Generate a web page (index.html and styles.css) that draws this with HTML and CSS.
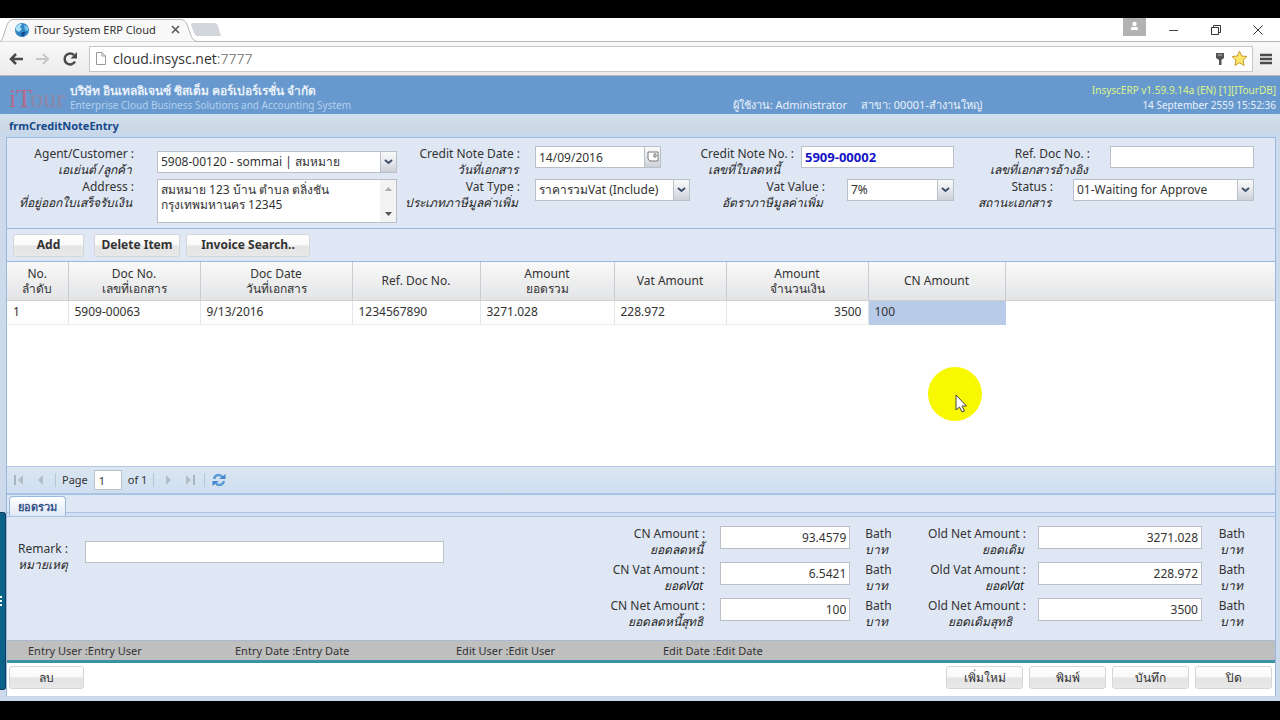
FILE: index.html
```html
<!DOCTYPE html>
<html lang="th">
<head>
<meta charset="UTF-8" />
<meta name="viewport" content="width=device-width, initial-scale=1.0"/>
<title>iTour System ERP Cloud</title>
<link rel="stylesheet" href="styles.css">
</head>
<body>

<div class="window">

  <!-- browser tabs -->
  <div class="tabs">
    <svg class="tab-shape" width="230" height="24" viewBox="0 0 230 24">
      <path d="M0 23.500C2 23 3 19 5 13S8 2 13 1.500H181C186 2 187 6 189 12S192 22 197 23.500H230" fill="#f8f8f8" stroke="#b4b4b4"/>
      <path d="M193 5H214Q217 5 218 8L221 18H197Q195 18 194 15L191 7Q191 5 193 5Z" fill="#d3d6da"/>
    </svg>
    <div class="tab">
      <svg width="16" height="16" viewBox="0 0 16 16">
        <circle cx="8" cy="8" r="7" fill="#2f86c5"/>
        <path d="M2 5Q5 1 8 2L6 5L8 7L5 10L2 8Z" fill="#a9e0f5"/>
        <path d="M10 3L14 5L14 9L11 8Z" fill="#7cc4ec"/>
        <path d="M8 10L12 10L9 15L7 13Z" fill="#164f8b"/>
      </svg>
      <span class="tab-title">iTour System ERP Cloud</span>
      <button class="tab-close" aria-label="Close tab"><svg width="9" height="9" viewBox="0 0 9 9"><path d="M1 1L8 8M8 1L1 8" stroke="#555" stroke-width="1.500"/></svg></button>
    </div>
    <div class="window-buttons">
      <span class="person"><svg width="23" height="18" viewBox="0 0 23 18"><rect width="23" height="18" fill="#b2b2b2"/><circle cx="11.500" cy="6" r="2.200" fill="#fff"/><path d="M8 12V10Q8 9 10 9H13Q15 9 15 10V12Z" fill="#fff"/></svg></span>
      <button aria-label="Minimize"><svg width="12" height="12" viewBox="0 0 12 12"><path d="M1 6.500H10" stroke="#444"/></svg></button>
      <button aria-label="Restore"><svg width="12" height="12" viewBox="0 0 12 12"><path d="M1.500 3.500H8.500V10.500H1.500ZM3.500 3V1.500H10.500V8.500H9" fill="none" stroke="#333"/></svg></button>
      <button aria-label="Close"><svg width="12" height="12" viewBox="0 0 12 12"><path d="M1.500 1.500L10.500 10.500M10.500 1.500L1.500 10.500" stroke="#333"/></svg></button>
    </div>
  </div>

  <!-- address bar -->
  <div class="toolbar">
    <button aria-label="Back"><svg width="16" height="14" viewBox="0 0 16 14"><path d="M15 7H3M8 2L3 7L8 12" fill="none" stroke="#4a4a4a" stroke-width="2.500"/></svg></button>
    <button aria-label="Forward"><svg width="16" height="14" viewBox="0 0 16 14"><path d="M1 7H13M8 2L13 7L8 12" fill="none" stroke="#c6c6c6" stroke-width="2"/></svg></button>
    <button aria-label="Reload"><svg width="16" height="16" viewBox="0 0 16 16"><path d="M13 10.500A5.500 5.500 0 1 1 12 4" fill="none" stroke="#4a4a4a" stroke-width="2.500"/><path d="M15 1V7.500H8.500Z" fill="#4a4a4a"/></svg></button>
    <div class="address">
      <svg width="12" height="15" viewBox="0 0 12 15"><path d="M1.500 1.500H7L10.500 5V13.500H1.500ZM7 1.500V5H10.500" fill="#fff" stroke="#999"/></svg>
      <span class="url">cloud.insysc.net<span class="port">:7777</span></span>
      <svg width="10" height="14" viewBox="0 0 10 14"><path d="M1 1H9V6L6.500 8V13H4V8L1 6Z" fill="#555"/><path d="M3 3H7" stroke="#bbb"/></svg>
      <svg width="17" height="17" viewBox="0 0 17 17"><path d="M8.500 1.200L10.700 6L15.900 6.500L12 10.200L13.100 15.500L8.500 12.800L3.900 15.500L5 10.200L1.100 6.500L6.300 6Z" fill="#fde668" stroke="#c79a38"/></svg>
    </div>
    <button aria-label="Menu"><svg width="12" height="12" viewBox="0 0 12 12"><path d="M0 2H12M0 6H12M0 10H12" stroke="#4a4a4a" stroke-width="2.500"/></svg></button>
  </div>

  <!-- application header -->
  <header class="app-header">
    <div class="logo"><span>iT</span>our</div>
    <div class="company">
      <strong>บริษัท อินเทลลิเจนซ์ ซิสเต็ม คอร์เปอร์เรชั่น จำกัด</strong>
      <small>Enterprise Cloud Business Solutions and Accounting System</small>
    </div>
    <div class="login">
      <span>ผู้ใช้งาน: Administrator</span>
      <span>สาขา: 00001-สำงานใหญ่</span>
    </div>
    <div class="version">
      <span class="build">InsyscERP v1.59.9.14a (EN) [1][ITourDB]</span>
      <span>14 September 2559 15:52:36</span>
    </div>
  </header>

  <h1 class="form-title">frmCreditNoteEntry</h1>

  <main class="panel">
    <form class="entry-form">
      <div class="group">
        <div class="field middle">
          <label for="agent">Agent/Customer :<i>เอเย่นต์ /ลูกค้า</i></label>
          <span class="combo">
            <select id="agent"><option>5908-00120 - sommai | สมหมาย</option></select>
            <span class="trigger"><svg width="9" height="6" viewBox="0 0 9 6"><path d="M1 1L4.500 4L8 1" fill="none" stroke="#3d5068" stroke-width="2"/></svg></span>
          </span>
        </div>
        <div class="field">
          <label for="address">Address :<i>ที่อยู่ออกใบเสร็จรับเงิน</i></label>
          <span class="memo">
            <textarea id="address">สมหมาย 123 บ้าน ตำบล ตลิ่งชัน
กรุงเทพมหานคร 12345</textarea>
            <span class="memo-scroll">
              <svg width="7" height="4" viewBox="0 0 7 4"><path d="M0 4L3.500 0L7 4Z" fill="#aaa"/></svg>
              <svg width="7" height="4" viewBox="0 0 7 4"><path d="M0 0L3.500 4L7 0Z" fill="#555"/></svg>
            </span>
          </span>
        </div>
      </div>

      <div class="group group-vat">
        <div class="field">
          <label for="date">Credit Note Date :<i>วันที่เอกสาร</i></label>
          <span class="combo date">
            <input type="text" id="date" value="14/09/2016">
            <span class="trigger"><svg width="12" height="12" viewBox="0 0 12 12"><path d="M1 1H11V10H3L1 8Z" fill="#fff" stroke="#777"/><path d="M7 3H9V6H7Z" fill="none" stroke="#777"/></svg></span>
          </span>
        </div>
        <div class="field">
          <label for="vatType">Vat Type :<i>ประเภทภาษีมูลค่าเพิ่ม</i></label>
          <span class="combo">
            <select id="vatType"><option>ราคารวมVat (Include)</option></select>
            <span class="trigger"><svg width="9" height="6" viewBox="0 0 9 6"><path d="M1 1L4.500 4L8 1" fill="none" stroke="#3d5068" stroke-width="2"/></svg></span>
          </span>
        </div>
      </div>

      <div class="group group-no">
        <div class="field">
          <label for="noteNo">Credit Note No. :<i class="inset">เลขที่ใบลดหนี้</i></label>
          <input type="text" id="noteNo" class="note-no" value="5909-00002">
        </div>
        <div class="field wide-gap">
          <label for="vatValue">Vat Value :<i>อัตราภาษีมูลค่าเพิ่ม</i></label>
          <span class="combo vat-value">
            <select id="vatValue"><option>7%</option></select>
            <span class="trigger"><svg width="9" height="6" viewBox="0 0 9 6"><path d="M1 1L4.500 4L8 1" fill="none" stroke="#3d5068" stroke-width="2"/></svg></span>
          </span>
        </div>
      </div>

      <div class="group group-ref">
        <div class="field">
          <label for="refNo">Ref. Doc No. :<i>เลขที่เอกสารอ้างอิง</i></label>
          <input type="text" id="refNo" class="ref-no">
        </div>
        <div class="field">
          <label for="status">Status :<i>สถานะเอกสาร</i></label>
          <span class="combo status">
            <select id="status"><option>01-Waiting for Approve</option></select>
            <span class="trigger"><svg width="9" height="6" viewBox="0 0 9 6"><path d="M1 1L4.500 4L8 1" fill="none" stroke="#3d5068" stroke-width="2"/></svg></span>
          </span>
        </div>
      </div>
    </form>

    <div class="actions">
      <button class="btn btn-add">Add</button>
      <button class="btn">Delete Item</button>
      <button class="btn btn-search">Invoice Search..</button>
    </div>

    <div class="items">
      <table>
        <colgroup>
          <col class="c-no"><col class="c-doc"><col class="c-date"><col class="c-ref"><col class="c-total"><col class="c-vat"><col class="c-amount"><col class="c-cn"><col>
        </colgroup>
        <thead>
          <tr>
            <th>No.<br>ลำดับ</th>
            <th>Doc No.<br>เลขที่เอกสาร</th>
            <th>Doc Date<br>วันที่เอกสาร</th>
            <th>Ref. Doc No.</th>
            <th>Amount<br>ยอดรวม</th>
            <th>Vat Amount</th>
            <th>Amount<br>จำนวนเงิน</th>
            <th>CN Amount</th>
            <th></th>
          </tr>
        </thead>
        <tbody>
          <tr>
            <td>1</td>
            <td>5909-00063</td>
            <td>9/13/2016</td>
            <td>1234567890</td>
            <td>3271.028</td>
            <td>228.972</td>
            <td class="num">3500</td>
            <td class="selected">100</td>
            <td class="blank"></td>
          </tr>
        </tbody>
      </table>
    </div>

    <div class="paging">
      <button aria-label="First page"><svg width="10" height="10" viewBox="0 0 10 10"><path d="M1 0V10" stroke="#aab4be" stroke-width="2"/><path d="M9 0V10L4 5Z" fill="#b5bec8"/></svg></button>
      <button aria-label="Previous page"><svg width="10" height="10" viewBox="0 0 10 10"><path d="M7 0V10L2 5Z" fill="#b5bec8"/></svg></button>
      <span class="sep"></span>
      <label for="page">Page</label>
      <input type="text" id="page" value="1">
      <span class="of">of 1</span>
      <span class="sep"></span>
      <button aria-label="Next page"><svg width="10" height="10" viewBox="0 0 10 10"><path d="M3 0V10L8 5Z" fill="#b5bec8"/></svg></button>
      <button aria-label="Last page"><svg width="10" height="10" viewBox="0 0 10 10"><path d="M9 0V10" stroke="#aab4be" stroke-width="2"/><path d="M1 0V10L6 5Z" fill="#b5bec8"/></svg></button>
      <span class="sep"></span>
      <button aria-label="Refresh"><svg width="14" height="14" viewBox="0 0 14 14"><path d="M2 6Q3 2 7 2Q9 2 10 4M12 8Q11 12 7 12Q5 12 4 10" fill="none" stroke="#5a9bd8" stroke-width="2.500"/><path d="M7 6H13.500V1ZM7 8H0.500V13Z" fill="#4488cb"/></svg></button>
    </div>

    <div class="tab-strip">
      <button class="sum-tab">ยอดรวม</button>
    </div>

    <form class="summary">
      <div class="remark">
        <label for="remark">Remark :<i>หมายเหตุ</i></label>
        <input type="text" id="remark">
      </div>
      <div class="totals">
        <div class="total">
          <label for="cnAmount">CN Amount :<i>ยอดลดหนี้</i></label>
          <input type="text" id="cnAmount" value="93.4579">
          <span class="unit">Bath<i>บาท</i></span>
        </div>
        <div class="total">
          <label for="cnVat">CN Vat Amount :<i>ยอดVat</i></label>
          <input type="text" id="cnVat" value="6.5421">
          <span class="unit">Bath<i>บาท</i></span>
        </div>
        <div class="total">
          <label for="cnNet">CN Net Amount :<i>ยอดลดหนี้สุทธิ</i></label>
          <input type="text" id="cnNet" value="100">
          <span class="unit">Bath<i>บาท</i></span>
        </div>
      </div>
      <div class="totals totals-old">
        <div class="total">
          <label for="oldAmount">Old Net Amount :<i>ยอดเดิม</i></label>
          <input type="text" id="oldAmount" value="3271.028">
          <span class="unit">Bath<i>บาท</i></span>
        </div>
        <div class="total">
          <label for="oldVat">Old Vat Amount :<i>ยอดVat</i></label>
          <input type="text" id="oldVat" value="228.972">
          <span class="unit">Bath<i>บาท</i></span>
        </div>
        <div class="total">
          <label for="oldNet">Old Net Amount :<i class="inset">ยอดเดิมสุทธิ</i></label>
          <input type="text" id="oldNet" value="3500">
          <span class="unit">Bath<i>บาท</i></span>
        </div>
      </div>
    </form>

    <div class="audit">
      <span>Entry User :Entry User</span>
      <span>Entry Date :Entry Date</span>
      <span>Edit User :Edit User</span>
      <span>Edit Date :Edit Date</span>
    </div>

    <footer class="footer">
      <button class="btn btn-delete">ลบ</button>
      <button class="btn">เพิ่มใหม่</button>
      <button class="btn">พิมพ์</button>
      <button class="btn">บันทึก</button>
      <button class="btn">ปิด</button>
    </footer>
  </main>

  <div class="drawer"><svg width="3" height="10" viewBox="0 0 3 10"><path d="M0 1H2M0 5H2M0 9H2" stroke="#fff" stroke-width="2"/></svg></div>

  <svg class="pointer" width="54" height="54" viewBox="0 0 54 54">
    <circle cx="27" cy="27" r="27" fill="#f8f800"/>
    <path d="M28 28V43L31.500 40L34 45L36.500 44L34 39H38.500Z" fill="#fff" stroke="#444"/>
  </svg>
</div>

</body>
</html>
```
FILE: styles.css
```css
* {
  box-sizing: border-box;
}

body {
  margin: 0;
  height: 100vh;
  padding: 18px 0 19px;
  background: #000;
  color: #333;
  font-family: "Noto Sans", Tahoma, sans-serif;
  font-size: 12px;
  line-height: 16px;
}

button, input, select, textarea {
  margin: 0;
  font: inherit;
  color: inherit;
}

button {
  padding: 0;
  border: 0;
  background: none;
}

svg {
  display: block;
  flex: none;
}

.window {
  position: relative;
  display: flex;
  flex-direction: column;
  height: 100%;
  background: #ccdaec;
}

/* browser */
.tabs {
  position: relative;
  display: flex;
  flex: none;
  height: 24px;
  background: #fff;
  border-bottom: 1px solid #b4b4b4;
}

.tab-shape {
  position: absolute;
  left: 0;
  top: 0;
}

.tab {
  position: relative;
  display: flex;
  align-items: center;
  width: 180px;
  padding-left: 14px;
}

.tab-title {
  flex: 1;
  padding-left: 4px;
  font-size: 11px;
  white-space: nowrap;
}

.window-buttons {
  display: flex;
  align-items: center;
  gap: 30px;
  margin-left: auto;
  padding-right: 16px;
}

.person {
  align-self: flex-start;
  margin-right: -8px;
}

.toolbar {
  display: flex;
  flex: none;
  align-items: center;
  gap: 11px;
  height: 34px;
  padding: 0 8px;
  background: linear-gradient(#f8f8f8, #ececec);
  border-bottom: 1px solid #b9b9b9;
}

.address {
  display: flex;
  flex: 1;
  align-items: center;
  gap: 6px;
  height: 26px;
  margin-right: -4px;
  padding: 0 4px 0 5px;
  background: #fff;
  border: 1px solid #c6c6c6;
}

.url {
  flex: 1;
  font-family: "Open Sans", sans-serif;
  font-size: 14px;
}

.port {
  color: #888;
}

/* application header */
.app-header {
  display: flex;
  flex: none;
  height: 38px;
  padding: 7px 4px 0 9px;
  background: #6899ce;
  color: #e8f1fb;
  font-size: 11px;
  line-height: 15px;
  white-space: nowrap;
}

.logo {
  width: 61px;
  color: #8d86a5;
  font-family: "Liberation Serif", serif;
  font-size: 26px;
  line-height: 32px;
}

.logo span {
  color: #b5698a;
}

.company {
  display: flex;
  flex: 1;
  flex-direction: column;
}

.company strong {
  font-size: 12px;
}

.company small {
  color: #b3d0ee;
  font-size: 10px;
}

.login {
  display: flex;
  align-items: flex-end;
  gap: 14px;
  margin-right: 110px;
  padding-bottom: 2px;
}

.version {
  display: flex;
  flex-direction: column;
  text-align: right;
  font-size: 10px;
}

.build {
  color: #dcf58a;
}

.form-title {
  flex: none;
  margin: 0;
  height: 23px;
  padding-left: 9px;
  background: linear-gradient(#d3e0f0, #ccd8e6 60%, #c6d8ee);
  border-radius: 4px 4px 0 0;
  color: #15498b;
  font-size: 11px;
  line-height: 23px;
}

.panel {
  display: flex;
  flex: 1;
  flex-direction: column;
  min-height: 0;
  margin: 0 4px 5px 6px;
  background: #dfe7f4;
  border: 1px solid #99b8de;
  border-bottom: 0;
}

label i, .unit i {
  display: block;
  padding-right: 2px;
  color: #222;
}

label .inset {
  padding-right: 14px;
}

/* entry form */
.entry-form {
  display: grid;
  grid-template-columns: minmax(0, 390fr) minmax(0, 293fr) minmax(0, 264fr) minmax(0, 300fr);
  flex: none;
  height: 91px;
  padding: 8px 21px 0 0;
  border-bottom: 1px solid #99b8de;
  white-space: nowrap;
}

.group {
  display: flex;
  flex-direction: column;
  gap: 1px;
}

.field {
  display: flex;
  align-items: flex-start;
  gap: 23px;
  height: 32px;
}

.field.middle {
  align-items: center;
}

.field label {
  flex: none;
  width: 127px;
  text-align: right;
}

.group-vat .field {
  gap: 15px;
}

.group-vat label {
  width: 123px;
}

.group-no .field {
  gap: 7px;
}

.group-no .field.wide-gap {
  gap: 22px;
}

.group-ref .field {
  gap: 20px;
}

.group-no label, .group-ref label {
  flex: 1;
}

input[type="text"] {
  min-width: 0;
  height: 22px;
  padding: 0 5px;
  background: #fff;
  border: 1px solid #b9c0c8;
}

.combo {
  display: flex;
  flex: 1;
  min-width: 0;
  height: 22px;
}

.combo select, .combo input[type="text"] {
  flex: 1;
  min-width: 0;
  height: 22px;
  padding: 0 3px;
  appearance: none;
  background: #fff;
  border: 1px solid #b9c0c8;
  border-radius: 0;
}

.trigger {
  display: flex;
  align-items: center;
  justify-content: center;
  width: 16px;
  background: linear-gradient(#fafafa, #e6e8ec 50%, #cbd0d8);
  border: 1px solid #b9c0c8;
  border-left: 0;
}

.combo.date {
  flex: none;
  width: 126px;
}

.combo.vat-value {
  flex: none;
  width: 107px;
}

.combo.status {
  flex: none;
  width: 181px;
}

input.note-no {
  width: 153px;
  padding: 0 3px;
  color: #1414c8;
  font-size: 13px;
  font-weight: bold;
}

.ref-no {
  width: 144px;
}

.memo {
  display: flex;
  flex: 1;
  height: 44px;
  background: #fff;
  border: 1px solid #b9c0c8;
}

.memo textarea {
  flex: 1;
  min-width: 0;
  padding: 2px 3px;
  border: 0;
  background: none;
  line-height: 15px;
  resize: none;
  overflow: hidden;
}

.memo-scroll {
  display: flex;
  flex-direction: column;
  align-items: center;
  justify-content: space-between;
  width: 16px;
  padding: 7px 0 6px;
  background: #f3f3f3;
}

/* buttons */
.btn {
  height: 23px;
  background: linear-gradient(#fff, #f8f8f8 48%, #e4e4e4 52%, #e8e8e8);
  border: 1px solid #d4d6da;
  border-radius: 3px;
}

.actions {
  display: flex;
  flex: none;
  align-items: center;
  gap: 6px;
  height: 32px;
  padding-left: 6px;
}

.actions .btn {
  width: 86px;
  font-weight: bold;
}

.actions .btn-add {
  width: 71px;
  margin-right: 4px;
}

.actions .btn-search {
  width: 124px;
}

/* item grid */
.items {
  flex: 1;
  min-height: 0;
  background: #fefefe;
  border-top: 1px solid #99b8de;
}

.items table {
  width: 100%;
  border-collapse: collapse;
  table-layout: fixed;
}

.c-no { width: 61px; }
.c-doc { width: 132px; }
.c-date { width: 152px; }
.c-ref { width: 128px; }
.c-total { width: 134px; }
.c-vat { width: 112px; }
.c-amount { width: 142px; }
.c-cn { width: 137px; }

.items th {
  height: 38px;
  padding: 0;
  background: linear-gradient(#f9f9f9, #e3e4e6);
  border-right: 1px solid #c9cdd3;
  border-bottom: 1px solid #d0d0d0;
  font-weight: normal;
  line-height: 15px;
}

.items th:last-child {
  border-right: 0;
}

.items td {
  height: 24px;
  padding: 0 6px;
  border-right: 1px solid #e2e4e8;
  border-bottom: 1px solid #ededed;
}

.items td.num {
  text-align: right;
}

.items td.selected {
  background: #b8cbe9;
  border-color: #b8cbe9;
}

.items td.blank {
  border: 0;
}

/* paging */
.paging {
  display: flex;
  flex: none;
  align-items: center;
  gap: 6px;
  height: 29px;
  padding-left: 4px;
  background: linear-gradient(#dbe6f1, #cfdff0);
  border-top: 1px solid #b3cae4;
  border-bottom: 2px solid #a9c3e4;
  font-size: 11px;
}

.paging button {
  width: 16px;
}

.paging button svg {
  margin: 0 auto;
}

.paging input[type="text"] {
  width: 28px;
  height: 20px;
  padding: 0 4px;
}

.sep {
  width: 1px;
  height: 14px;
  background: #b3c6dc;
}

/* totals */
.tab-strip {
  display: flex;
  flex: none;
  align-items: flex-end;
  height: 22px;
  padding-left: 2px;
  border-bottom: 1px solid #a9c3e4;
  box-shadow: inset 0 -3px #d3e1f2, inset 0 -4px #a9c3e4;
}

.sum-tab {
  width: 57px;
  height: 20px;
  background: linear-gradient(#fff, #dfe8f6);
  border: 1px solid #99b8de;
  border-bottom: 0;
  border-radius: 4px 4px 0 0;
  color: #36558a;
  font-size: 11px;
  font-weight: bold;
}

.summary {
  display: grid;
  grid-template-columns: 437fr 447fr 355fr;
  flex: none;
  height: 123px;
  padding: 9px 30px 0 0;
  white-space: nowrap;
}

.remark {
  display: flex;
  align-items: flex-start;
  padding: 15px 0 0 11px;
}

.remark label {
  width: 67px;
}

.remark input {
  flex: 1;
}

.totals {
  display: flex;
  flex-direction: column;
  gap: 4px;
}

.total {
  display: flex;
  gap: 15px;
  height: 32px;
}

.total label {
  flex: 1;
  text-align: right;
}

.total input[type="text"] {
  width: 130px;
  height: 23px;
  padding: 0 3px;
  text-align: right;
}

.totals-old .total {
  gap: 12px;
}

.totals-old .total input[type="text"] {
  width: 164px;
}

.unit {
  width: 25px;
  text-align: right;
}

.totals-old .unit {
  width: 31px;
}

.audit {
  display: grid;
  grid-template-columns: 207px 221px 207px 1fr;
  flex: none;
  height: 23px;
  padding-left: 21px;
  background: #bfbfbf;
  border-top: 1px solid #a9b9d2;
  border-bottom: 3px solid #3a93a3;
  font-size: 11px;
  line-height: 20px;
}

.footer {
  display: flex;
  flex: none;
  gap: 6px;
  height: 33px;
  padding: 3px 3px 0 2px;
  background: #fff;
}

.footer .btn {
  width: 77px;
}

.footer .btn-delete {
  width: 75px;
  margin-right: auto;
}

.drawer {
  position: absolute;
  left: 0;
  bottom: 11px;
  display: flex;
  align-items: center;
  width: 6px;
  height: 178px;
  background: #0b6288;
  border: solid #123c5e;
  border-width: 1px 1px 1px 0;
  border-radius: 0 3px 3px 0;
}

.pointer {
  position: absolute;
  left: 928px;
  top: 349px;
}
```
